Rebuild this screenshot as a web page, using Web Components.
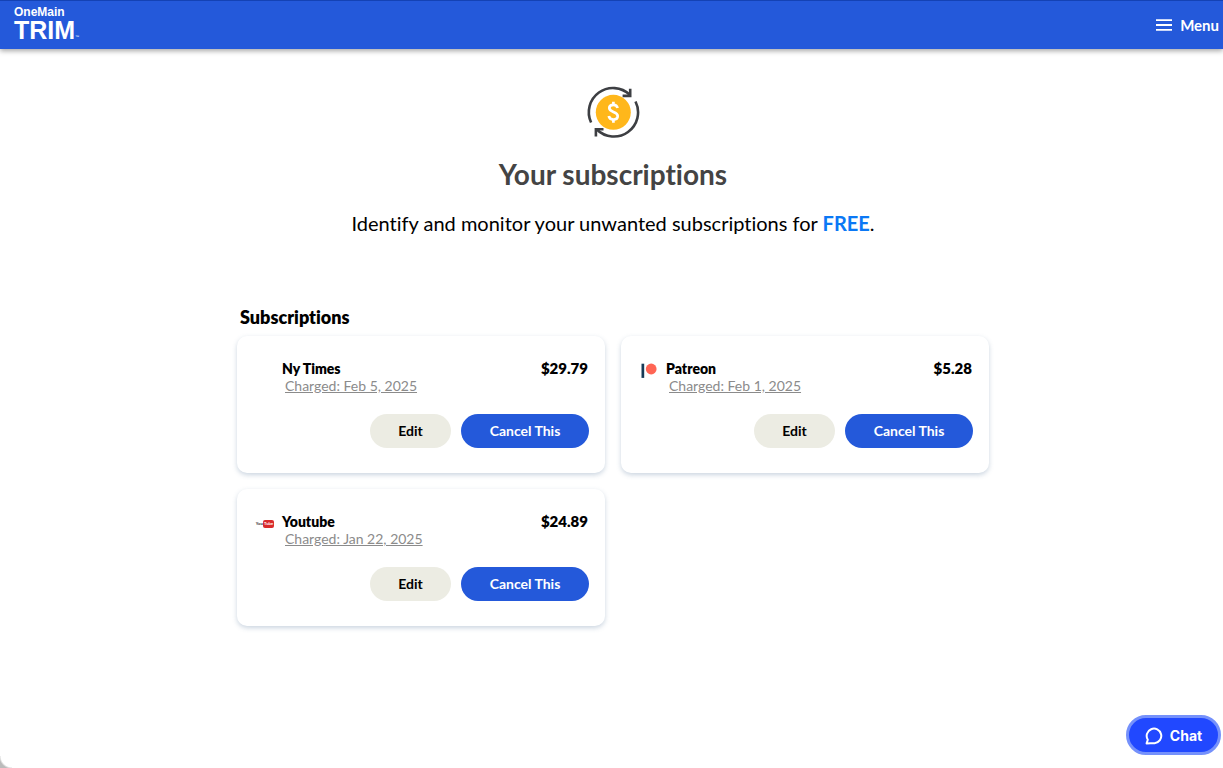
<!DOCTYPE html>
<html lang="en">
<head>
<meta charset="utf-8">
<meta name="viewport" content="width=device-width, initial-scale=1">
<title>Your subscriptions</title>
<style>
body { margin: 0; background: #fff; color: #000; font-family: Lato, "Open Sans", sans-serif; font-variant-ligatures: none; }
</style>
</head>
<body>
<trim-app></trim-app>

<template id="app-t">
<style>
:host { display: block; min-height: 100vh; }
main { padding: 36px 0 40px 3px; }
.intro { display: flex; flex-direction: column; align-items: center; text-align: center; }
h1 { margin: 17px 0 0; font-size: 28px; line-height: 36px; font-weight: 700; color: #444; }
p { margin: 17px 0 0; font-size: 20px; line-height: 28px; }
p b { color: #0b78f5; font-weight: 700; }
section { max-width: 752px; margin: 67px auto 0; }
h2 { margin: 0 3px 6px; font-size: 18px; line-height: 26px; font-weight: 800; }
.list { display: grid; grid-template-columns: repeat(auto-fit, minmax(320px, 1fr)); gap: 16px; }
</style>
<top-bar></top-bar>
<main>
  <div class="intro">
    <coin-icon></coin-icon>
    <h1>Your subscriptions</h1>
    <p>Identify and monitor your unwanted subscriptions for <b>FREE</b>.</p>
  </div>
  <section>
    <h2>Subscriptions</h2>
    <div class="list">
      <subscription-card><span slot="name">Ny Times</span><span slot="price">$29.79</span><span slot="date">Charged: Feb 5, 2025</span></subscription-card>
      <subscription-card><patreon-logo slot="logo"></patreon-logo><span slot="name">Patreon</span><span slot="price">$5.28</span><span slot="date">Charged: Feb 1, 2025</span></subscription-card>
      <subscription-card><youtube-logo slot="logo"></youtube-logo><span slot="name">Youtube</span><span slot="price">$24.89</span><span slot="date">Charged: Jan 22, 2025</span></subscription-card>
    </div>
  </section>
</main>
<chat-button>Chat</chat-button>
<window-corner></window-corner>
</template>

<template id="bar-t">
<style>
:host { display: block; }
header { box-sizing: border-box; height: 49px; display: flex; justify-content: space-between; align-items: center; padding: 0 4px 0 14px; border-top: 1px solid #1442b4; background: #2459da; color: #fff; box-shadow: 0 2px 5px rgba(0,0,0,.35); }
a { display: flex; flex-direction: column; align-self: flex-start; color: inherit; text-decoration: none; padding-top: 4px; font-family: "Liberation Sans", sans-serif; font-weight: 700; }
.one { font-size: 12px; line-height: 14px; }
.trim { display: flex; align-items: flex-end; font-size: 25px; line-height: 22px; }
small { font-size: 4px; line-height: 8px; font-weight: 400; }
button { display: flex; align-items: center; gap: 8px; padding: 0; border: 0; background: none; color: inherit; font: 700 15px/20px Lato, sans-serif; cursor: pointer; }
</style>
<header>
  <a href="#"><span class="one">OneMain</span><span class="trim">TRIM<small>™</small></span></a>
  <button type="button"><svg width="16" height="12" viewBox="0 0 16 12" aria-hidden="true"><path d="M0 1.2h16M0 6h16M0 10.8h16" stroke="#fff" stroke-width="1.8"/></svg>Menu</button>
</header>
</template>

<template id="coin-t">
<style>:host { display: block; height: 54px; } svg { display: block; }</style>
<svg width="54" height="54" viewBox="0 0 54 54" aria-hidden="true">
  <circle cx="27.3" cy="27.3" r="17.5" fill="#ffb71b"/>
  <g fill="none" stroke="#3d3f43" stroke-width="2.6">
    <path d="M5.1 37.5A24.2 24.2 0 0 1 43.8 9.8"/>
    <path d="M44.2 3.8v7.1h-7.6"/>
    <path d="M49.5 16.5A24.2 24.2 0 0 1 10.8 44.5"/>
    <path d="M9.9 51.4v-7.1h7.6"/>
  </g>
  <path d="M31.6 23c-.5-2-2-3.2-4.2-3.2-2.4 0-4.1 1.2-4.1 3.3 0 4.8 8.4 2.9 8.4 8 0 2.2-1.8 3.5-4.3 3.5-2.4 0-4.2-1.3-4.6-3.5M27.4 16.8v3M27.4 34.6v3.2" fill="none" stroke="#fff" stroke-width="2.7"/>
</svg>
</template>

<template id="card-t">
<style>
:host { display: block; padding: 24px 16px 25px; border-radius: 10px; background: #fff; box-shadow: 0 2px 5px rgba(70,105,145,.28); }
.info { display: grid; grid-template-columns: 24px 1fr auto; column-gap: 5px; }
.logo { grid-row: span 2; display: flex; justify-content: center; }
.name { font-size: 14px; line-height: 18px; font-weight: 800; }
.price { margin-right: 1px; font-size: 15px; line-height: 16px; font-weight: 800; }
.date { padding-left: 3px; font-size: 14px; line-height: 16px; }
.date a { color: #8b8b8b; text-decoration: underline; }
.actions { display: flex; justify-content: flex-end; gap: 10px; margin-top: 20px; }
button { box-sizing: border-box; height: 34px; padding: 0; border: 0; border-radius: 17px; font: 700 14px/18px Lato, sans-serif; cursor: pointer; }
.edit { width: 81px; background: #ecece3; color: #000; }
.cancel { width: 128px; background: #2459da; color: #fff; white-space: nowrap; }
</style>
<div class="info">
  <div class="logo"><slot name="logo"></slot></div>
  <div class="name"><slot name="name"></slot></div>
  <div class="price"><slot name="price"></slot></div>
  <div class="date"><a href="#"><slot name="date"></slot></a></div>
</div>
<div class="actions"><button class="edit" type="button">Edit</button><button class="cancel" type="button">Cancel This</button></div>
</template>

<template id="patreon-t">
<style>:host { display: block; padding-top: 3px; } svg { display: block; }</style>
<svg width="16" height="16" viewBox="0 0 16 16" aria-hidden="true"><path d="M.5.7h2.7v14.2H.5z" fill="#173b57"/><circle cx="10.2" cy="6" r="5.4" fill="#ff6554"/></svg>
</template>

<template id="youtube-t">
<style>
:host { display: flex; align-items: center; height: 22px; font: 700 4px/8px "Liberation Sans", sans-serif; color: #333; }
b { padding: 0 1px; border-radius: 2px; background: #d92b2b; color: #fff; }
</style>
You<b>Tube</b>
</template>

<template id="chat-t">
<style>
:host { position: fixed; right: 2px; bottom: 13px; }
button { box-sizing: border-box; display: flex; align-items: center; justify-content: center; gap: 7px; width: 95px; height: 40px; padding: 1px 0 0; border: 3px solid #7591fb; border-radius: 20px; background: #2148ff; color: #fff; font: 700 14px/18px Inter, sans-serif; cursor: pointer; }
</style>
<button type="button"><svg width="18" height="18" viewBox="0 0 18 18" aria-hidden="true"><path d="M1.6 16.4l1.2-3.6A7.3 7.3 0 1 1 9.6 16.2c-2.7.1-5.3.1-8 .2z" fill="none" stroke="#fff" stroke-width="2" stroke-linejoin="round"/></svg><slot></slot></button>
</template>

<template id="corner-t">
<style>:host { position: fixed; left: 0; bottom: 0; width: 12px; height: 12px; background: radial-gradient(circle at 100% 0, transparent 11px, #bbb 13px); pointer-events: none; }</style>
</template>

<script>
function define(name, templateId) {
  customElements.define(name, class extends HTMLElement {
    constructor() {
      super();
      this.attachShadow({ mode: "open" }).append(document.getElementById(templateId).content.cloneNode(true));
    }
  });
}
define("top-bar", "bar-t");
define("coin-icon", "coin-t");
define("patreon-logo", "patreon-t");
define("youtube-logo", "youtube-t");
define("subscription-card", "card-t");
define("chat-button", "chat-t");
define("window-corner", "corner-t");
define("trim-app", "app-t");
</script>
</body>
</html>
